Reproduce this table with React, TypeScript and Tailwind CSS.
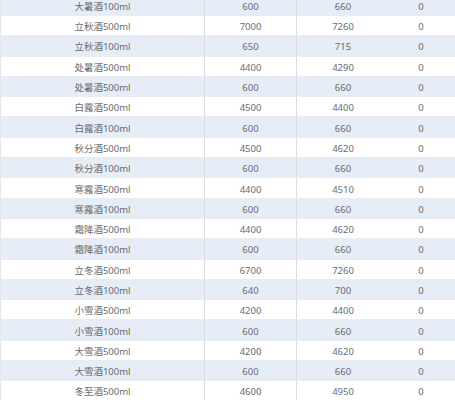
const rows: [string, string, string, string][] = [
  ['大暑酒100ml', '600', '660', '0'],
  ['立秋酒500ml', '7000', '7260', '0'],
  ['立秋酒100ml', '650', '715', '0'],
  ['处暑酒500ml', '4400', '4290', '0'],
  ['处暑酒500ml', '600', '660', '0'],
  ['白露酒500ml', '4500', '4400', '0'],
  ['白露酒100ml', '600', '660', '0'],
  ['秋分酒500ml', '4500', '4620', '0'],
  ['秋分酒100ml', '600', '660', '0'],
  ['寒露酒500ml', '4400', '4510', '0'],
  ['寒露酒100ml', '600', '660', '0'],
  ['霜降酒500ml', '4400', '4620', '0'],
  ['霜降酒100ml', '600', '660', '0'],
  ['立冬酒500ml', '6700', '7260', '0'],
  ['立冬酒100ml', '640', '700', '0'],
  ['小雪酒500ml', '4200', '4400', '0'],
  ['小雪酒100ml', '600', '660', '0'],
  ['大雪酒500ml', '4200', '4620', '0'],
  ['大雪酒100ml', '600', '660', '0'],
  ['冬至酒500ml', '4600', '4950', '0'],
];

const App = () => {
  return (
    <div className="w-[455px] h-[400px] overflow-hidden bg-white">
      <div
        className="-mt-[4.3px] flex flex-col border-l border-[#e4e7ec] text-[9.5px] leading-[12px] text-[#676b72]"
        style={{ fontFamily: '"Noto Sans", "Noto Sans CJK SC", sans-serif' }}
      >
        {rows.map((r, i) => (
          <div
            key={i}
            className={`grid h-[20.3px] shrink-0 grid-cols-[204px_92px_92px_1fr] items-center border-b border-[#e9edf2] ${
              i % 2 === 0 ? 'bg-[#e6edf6]' : 'bg-white'
            }`}
          >
            <div className="flex h-full items-center justify-center border-r border-[#d9dde3] pt-[3px]">
              {r[0]}
            </div>
            <div className="flex h-full items-center justify-center border-r border-[#d9dde3] pt-[3px]">
              {r[1]}
            </div>
            <div className="flex h-full items-center justify-center pt-[3px]">{r[2]}</div>
            <div className="flex h-full items-center justify-center pr-[2px] pt-[3px]">{r[3]}</div>
          </div>
        ))}
      </div>
    </div>
  );
};

export default App;
